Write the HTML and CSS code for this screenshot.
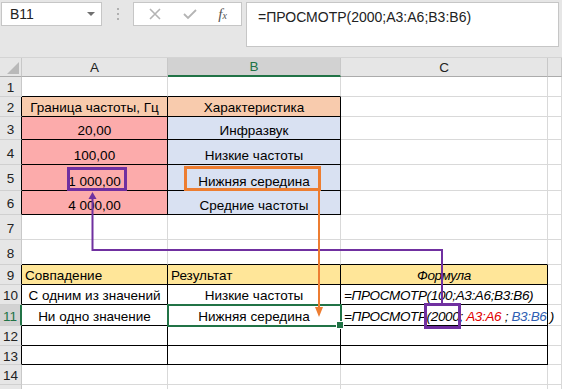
FILE: index.html
```html
<!DOCTYPE html>
<html lang="ru">
<head>
    <meta charset="UTF-8">
    <meta name="viewport" content="width=device-width, initial-scale=1.0">
    <title>ПРОСМОТР</title>
    <link rel="stylesheet" href="styles.css">
</head>
<body>
    <div class="bar">
        <div class="namebox"><span>B11</span><span class="caret"></span></div>
        <div class="grip"><i></i><i></i><i></i></div>
        <div class="fx-btns">
            <svg width="14" height="14" viewBox="0 0 14 14"><path d="M2 2 L12 12 M12 2 L2 12" stroke="#b4b4b4" stroke-width="1.6" fill="none"/></svg>
            <svg width="16" height="14" viewBox="0 0 16 14"><path d="M2 7 L6 11 L14 3" stroke="#b4b4b4" stroke-width="1.8" fill="none"/></svg>
            <span class="fx">f<sub>x</sub></span>
        </div>
        <div class="formula">=ПРОСМОТР(2000;A3:A6;B3:B6)</div>
    </div>

    <div class="sheet">
        <!-- headers -->
        <div class="corner"><span></span></div>
        <div class="colh">A</div>
        <div class="colh sel">B</div>
        <div class="colh">C</div>
        <div class="colh"></div>

        <!-- 1 -->
        <div class="rh">1</div>
        <div class="c bb"></div><div class="c bb"></div><div class="c"></div><div class="c"></div>
        <!-- 2 -->
        <div class="rh tb">2</div>
        <div class="c t peach ctr">Граница частоты, Гц</div>
        <div class="c t peach ctr">Характеристика</div>
        <div class="c"></div><div class="c"></div>
        <!-- 3 -->
        <div class="rh tb">3</div>
        <div class="c t pink ctr">20,00</div>
        <div class="c t blue ctr">Инфразвук</div>
        <div class="c"></div><div class="c"></div>
        <!-- 4 -->
        <div class="rh tb">4</div>
        <div class="c t pink ctr">100,00</div>
        <div class="c t blue ctr">Низкие частоты</div>
        <div class="c"></div><div class="c"></div>
        <!-- 5 -->
        <div class="rh tb">5</div>
        <div class="c t pink ctr">1 000,00</div>
        <div class="c t blue ctr">Нижняя середина</div>
        <div class="c"></div><div class="c"></div>
        <!-- 6 -->
        <div class="rh tb">6</div>
        <div class="c t pink ctr">4 000,00</div>
        <div class="c t blue ctr">Средние частоты</div>
        <div class="c"></div><div class="c"></div>
        <!-- 7 -->
        <div class="rh">7</div>
        <div class="c"></div><div class="c"></div><div class="c"></div><div class="c"></div>
        <!-- 8 -->
        <div class="rh">8</div>
        <div class="c bb"></div><div class="c bb"></div><div class="c bb"></div><div class="c"></div>
        <!-- 9 -->
        <div class="rh tb">9</div>
        <div class="c t yel">Совпадение</div>
        <div class="c t yel">Результат</div>
        <div class="c t yel ctr it">Формула</div>
        <div class="c"></div>
        <!-- 10 -->
        <div class="rh tb">10</div>
        <div class="c t ctr">С одним из значений</div>
        <div class="c t ctr">Низкие частоты</div>
        <div class="c t it">=ПРОСМОТР(100;A3:A6;B3:B6)</div>
        <div class="c"></div>
        <!-- 11 -->
        <div class="rh tb sel">11</div>
        <div class="c t ctr">Ни одно значение</div>
        <div class="c t ctr active">Нижняя середина</div>
        <div class="c t it">=ПРОСМОТР(2000;<span class="red">&nbsp;A3:A6</span>&nbsp;;&nbsp;<span class="ref">B3:B6</span>&nbsp;)</div>
        <div class="c"></div>
        <!-- 12 -->
        <div class="rh tb">12</div>
        <div class="c t"></div><div class="c t"></div><div class="c t"></div><div class="c"></div>
        <!-- 13 -->
        <div class="rh tb">13</div>
        <div class="c t"></div><div class="c t"></div><div class="c t"></div><div class="c"></div>
        <!-- 14 -->
        <div class="rh">14</div>
        <div class="c"></div><div class="c"></div><div class="c"></div><div class="c"></div>
        <!-- 15 (only its top edge shows) -->
        <div class="rh"></div>
        <div class="c"></div><div class="c"></div><div class="c"></div><div class="c"></div>
    </div>

    <svg class="marks" width="562" height="389" viewBox="0 0 562 389">
        <rect x="68.5" y="168.5" width="57" height="21" fill="none" stroke="#7030a0" stroke-width="3"/>
        <rect x="185.5" y="167.5" width="134" height="22" fill="none" stroke="#ed7d31" stroke-width="3"/>
        <rect x="425.5" y="304.5" width="34" height="23" fill="none" stroke="#7030a0" stroke-width="3"/>
        <polyline points="92.5,198 92.5,250 442,250 442,303" fill="none" stroke="#7030a0" stroke-width="2"/>
        <polygon points="88.5,199 96.5,199 92.5,192" fill="#7030a0"/>
        <line x1="319" y1="191" x2="319" y2="308" stroke="#ed7d31" stroke-width="2"/>
        <polygon points="315,307 323,307 319,317" fill="#ed7d31"/>
    </svg>
</body>
</html>
```

FILE: styles.css
```css
*{margin:0;padding:0;box-sizing:border-box;}
body{width:562px;height:389px;overflow:hidden;background:#fff;font-family:"Liberation Sans", Arial, sans-serif;font-size:13.5px;color:#000;position:relative;}

.bar{height:58px;background:#e6e6e6;display:flex;align-items:flex-start;padding-top:2px;border-bottom:1px solid #d4d4d4;}
.namebox{margin-left:1px;width:101px;height:24px;background:#fff;border:1px solid #c6c6c6;display:flex;align-items:center;justify-content:space-between;padding:0 6px 0 8px;font-size:14px;color:#222;}
.caret{width:0;height:0;border-left:4px solid transparent;border-right:4px solid transparent;border-top:4px solid #707070;}
.grip{width:31px;height:24px;display:flex;flex-direction:column;align-items:center;justify-content:center;gap:3px;}
.grip i{display:block;width:2px;height:2px;background:#b0b0b0;}
.fx-btns{width:109px;height:24px;background:#fff;border:1px solid #c6c6c6;display:flex;align-items:center;justify-content:space-around;padding:0 4px;}
.fx{font-family:"Liberation Serif", serif;font-style:italic;font-size:15px;color:#555;}
.fx sub{font-size:10px;vertical-align:0;}
.formula{margin-left:4px;width:313px;height:45px;background:#fff;border:1px solid #c6c6c6;padding:6px 0 0 11px;font-size:14px;color:#222;}

.sheet{display:grid;grid-template-columns:22px 146px 173px 207px 14px;grid-template-rows:19px 20px 20px 23px 25px 26px 24px 25px 25px 20px 20px 21px 20px 19px 20px 20px;}
.corner{background:#e6e6e6;border-right:1px solid #c8c8c8;border-bottom:1px solid #ababab;position:relative;}
.corner span{position:absolute;right:2px;bottom:2px;width:0;height:0;border-left:12px solid transparent;border-bottom:12px solid #b9b9b9;}
.colh{background:#e6e6e6;border-right:1px solid #c8c8c8;border-bottom:1px solid #ababab;display:flex;align-items:center;justify-content:center;color:#222;font-size:13.5px;}
.colh.sel{background:#d2d2d2;color:#217346;border-bottom:2px solid #217346;}
.rh{background:#e6e6e6;border-right:1px solid #c8c8c8;border-bottom:1px solid #d0d0d0;display:flex;align-items:center;justify-content:center;color:#222;font-size:13.5px;padding-top:2px;}
.rh.tb{border-right-color:#000;}
.rh.sel{background:#d2d2d2;color:#217346;border-right:2px solid #217346;}

.c{border-right:1px solid #d9d9d9;border-bottom:1px solid #d9d9d9;display:flex;align-items:flex-end;padding:0 3px 1px;white-space:nowrap;overflow:visible;}
.c.t{border-right-color:#000;border-bottom-color:#000;}
.c.bb{border-bottom-color:#000;}
.ctr{justify-content:center;}
.it{font-style:italic;letter-spacing:-0.35px;}
.peach{background:#f8cbad;}
.pink{background:#fcabab;}
.blue{background:#d9e1f2;}
.yel{background:#ffe699;}
.red{color:#e00000;}
.ref{color:#2f5fb3;}
.active{outline:2px solid #217346;outline-offset:-1px;position:relative;}
.active::after{content:"";position:absolute;right:-4px;bottom:-4px;width:6px;height:6px;background:#217346;border:1px solid #fff;}

.marks{position:absolute;left:0;top:0;pointer-events:none;}
```
